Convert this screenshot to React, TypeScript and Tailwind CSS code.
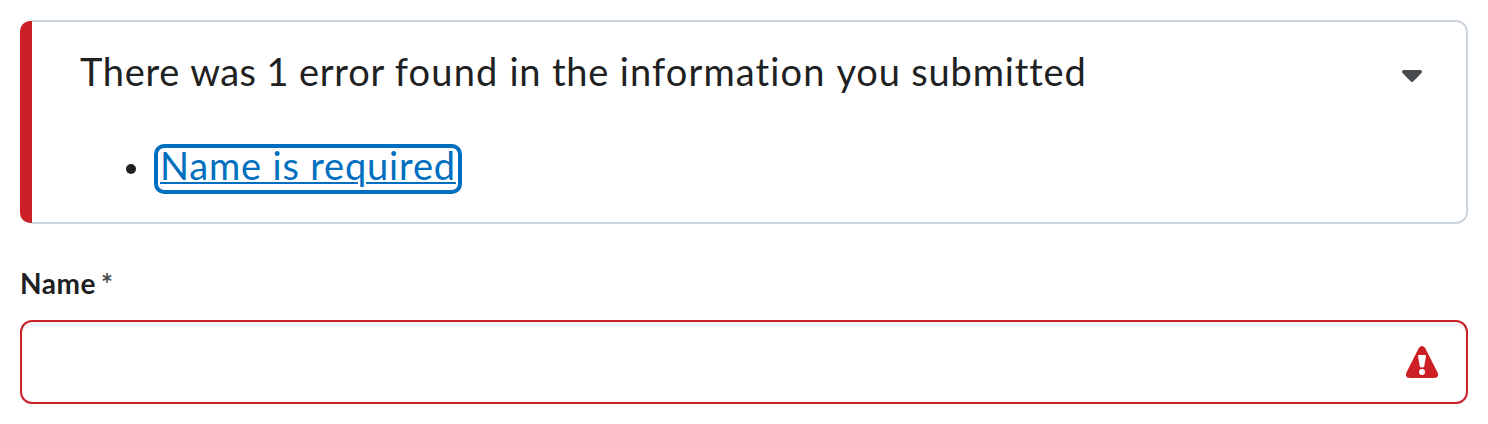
export default function App() {
  return (
    <main className="h-[424px] bg-white p-5 font-['Lato',sans-serif] text-[#202122]">
      <section className="flex h-[204px]">
        <div className="my-px w-3 shrink-0 rounded-l-[10px] bg-[#cd2026]" />
        <div className="flex-1 rounded-r-[12px] border-2 border-l-0 border-[#cdd5dc] pl-12">
          <div className="flex h-[102px] items-start justify-between pr-[44px] pt-[21px]">
            <h1 className="text-[38px] leading-[56px] tracking-[0.68px]">
              There <span className="tracking-[0.36px]">was 1 </span>
              <span className="tracking-[0.76px]">error </span>
              <span className="tracking-[1.16px]">found </span>
              <span className="tracking-[0.82px]">in the </span>
              <span className="tracking-[1.12px]">information </span>
              <span className="tracking-[0.83px]">you submitted</span>
            </h1>
            <svg className="mt-[27px] h-[12px] w-[20px]" viewBox="0 0 20 12">
              <path d="M1.5 0H18.5Q20 0 20 1.5Q20 2.5 19.3 3.2L11.2 11.4Q10 12.5 8.8 11.4L0.7 3.2Q0 2.5 0 1.5Q0 0 1.5 0Z" fill="#494c4e" />
            </svg>
          </div>
          <ul className="flex items-center pl-[46px] pt-5">
            <li className="flex items-center gap-[18px]">
              <span className="size-[10px] rounded-full bg-[#202122]" />
              <a href="#name" className="flex h-[50px] w-[308px] items-start whitespace-nowrap rounded-[10px] border-4 border-[#006fbf] pl-[2px] text-[38px] leading-[34px] tracking-[0.82px] text-[#006fbf] underline decoration-2 underline-offset-[2px]">Name is required</a>
            </li>
          </ul>
        </div>
      </section>
      <label htmlFor="name" className="mt-[41px] flex h-[37px] text-[28px] leading-[36px] tracking-[0.56px]">
        <span className="font-bold">Name</span>
        <span className="ml-[5px] font-bold text-[#494c4e]">*</span>
      </label>
      <div className="mt-[18px] flex h-[84px] items-center rounded-[12px] border-2 border-[#cd2026] pr-7 shadow-[inset_0_4px_0_#eff1f3]">
        <input id="name" className="h-full flex-1 bg-transparent outline-none" />
        <svg className="size-8" viewBox="0 0 32 32">
          <path d="M12.8 2Q16-2 19.2 2L31.3 26Q34 32 28 32H4Q-2 32 0.7 26Z" fill="#cd2026" />
          <path d="M12 10Q12 9 13 9H19Q20 9 20 10L18.3 20Q18 21.5 16 21.5Q14 21.5 13.7 20Z" fill="white" />
          <circle cx="16" cy="26" r="3" fill="white" />
        </svg>
      </div>
    </main>
  );
}
